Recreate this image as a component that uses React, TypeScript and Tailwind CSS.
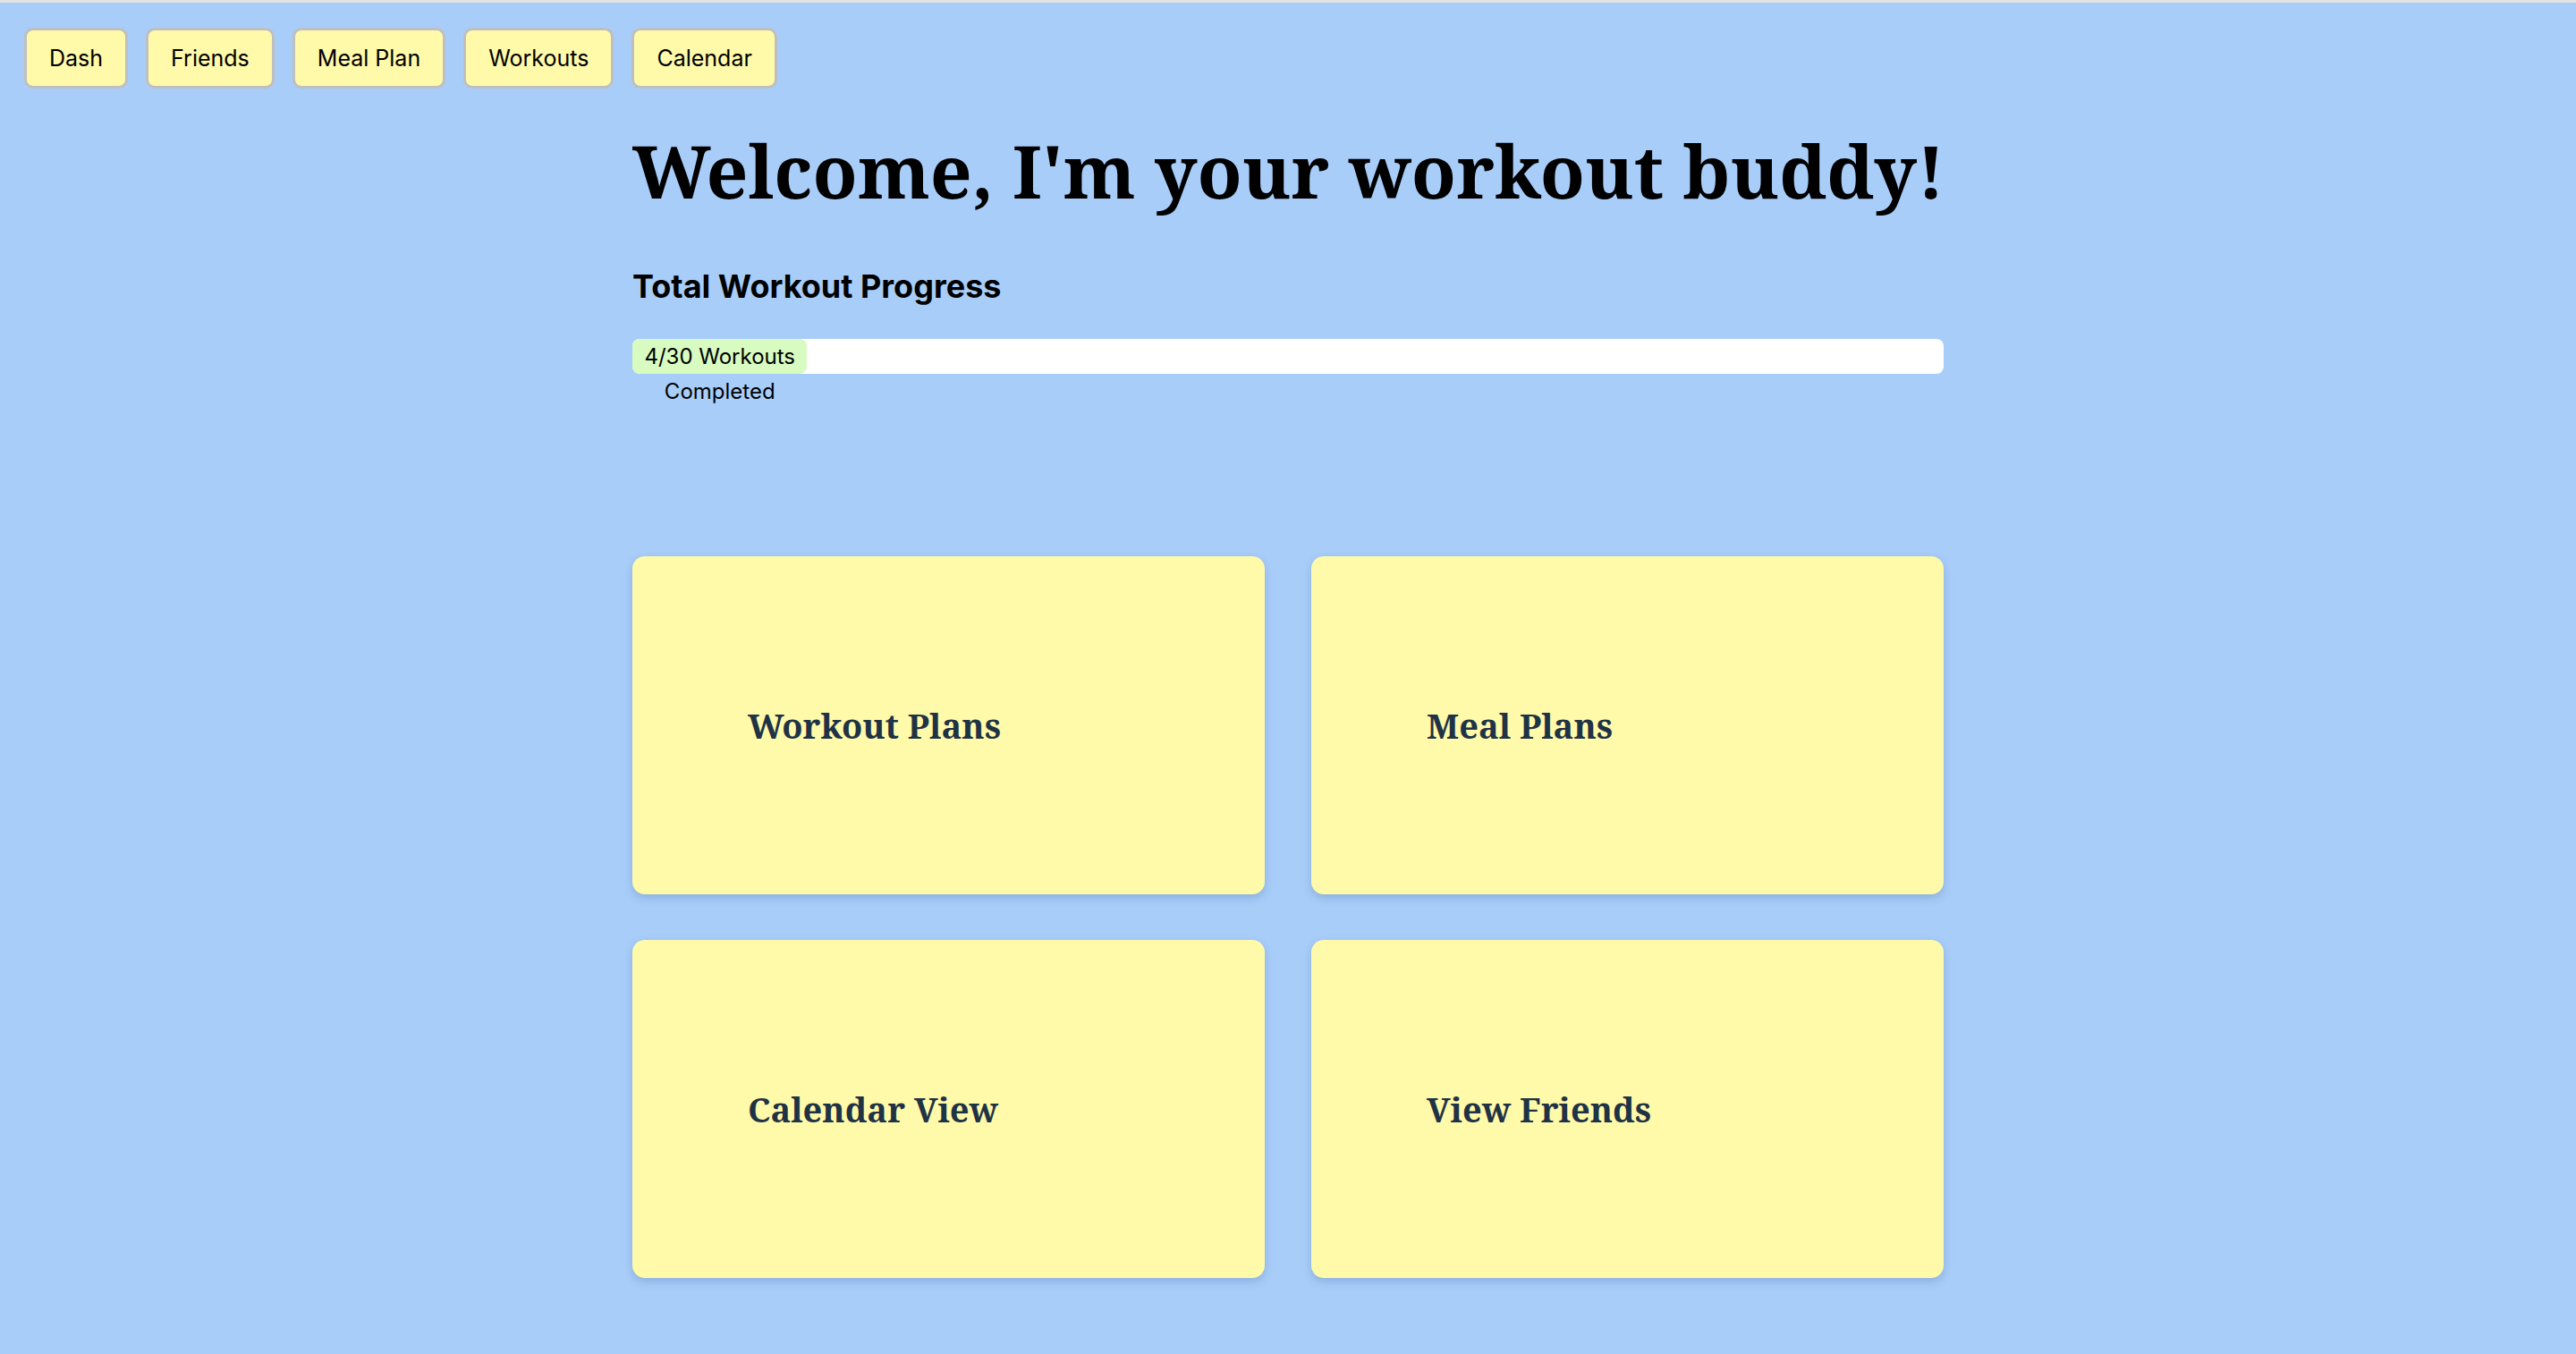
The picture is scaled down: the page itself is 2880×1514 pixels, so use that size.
import React from "react";

const navItems = ["Dash", "Friends", "Meal Plan", "Workouts", "Calendar"];
const cards = ["Workout Plans", "Meal Plans", "Calendar View", "View Friends"];

export default function App() {
  const total = 30;
  const done = 4;
  const pct = (done / total) * 100;
  return (
    <div className="min-h-[1514px] w-full bg-[#a8cdf9] font-['Inter','Noto_Sans',sans-serif] text-black">
      <div className="h-[3px] w-full bg-[#e4e4e4]" />
      <nav className="flex gap-[20px] pl-[27px] pt-[28px]">
        {navItems.map((n) => (
          <button
            key={n}
            className="h-[68px] rounded-[10px] border-[3px] border-[#bfbfbf] bg-[#fffaaa] px-[25px] text-[25px] leading-none text-black"
          >
            {n}
          </button>
        ))}
      </nav>
      <main className="mx-auto w-[1466px] pb-[85px]">
        <h1 className="mt-[49px] font-['Noto_Serif','DejaVu_Serif',serif] text-[82px] font-bold leading-[84px] whitespace-nowrap">
          Welcome, I'm your workout buddy!
        </h1>
        <h2 className="mt-[70px] text-[36px] font-bold leading-[36px]">Total Workout Progress</h2>
        <div className="mt-[41px] h-[39px] w-full rounded-[8px] bg-white">
          <div
            className="h-full rounded-[8px] bg-[#d8fbc1] text-center text-[24px] leading-[39px]"
            style={{ width: `${pct}%` }}
          >
            {done}/{total} Workouts Completed
          </div>
        </div>
        <div className="mt-[204px] grid grid-cols-2 gap-x-[52px] gap-y-[51px]">
          {cards.map((c) => (
            <div
              key={c}
              className="flex h-[378px] items-center rounded-[14px] bg-[#fffaaa] pl-[129px] shadow-[0_4px_10px_rgba(60,90,140,0.25)]"
            >
              <span className="font-['Noto_Serif','DejaVu_Serif',serif] text-[38px] font-bold text-[#1f3346]">
                {c}
              </span>
            </div>
          ))}
        </div>
      </main>
    </div>
  );
}
